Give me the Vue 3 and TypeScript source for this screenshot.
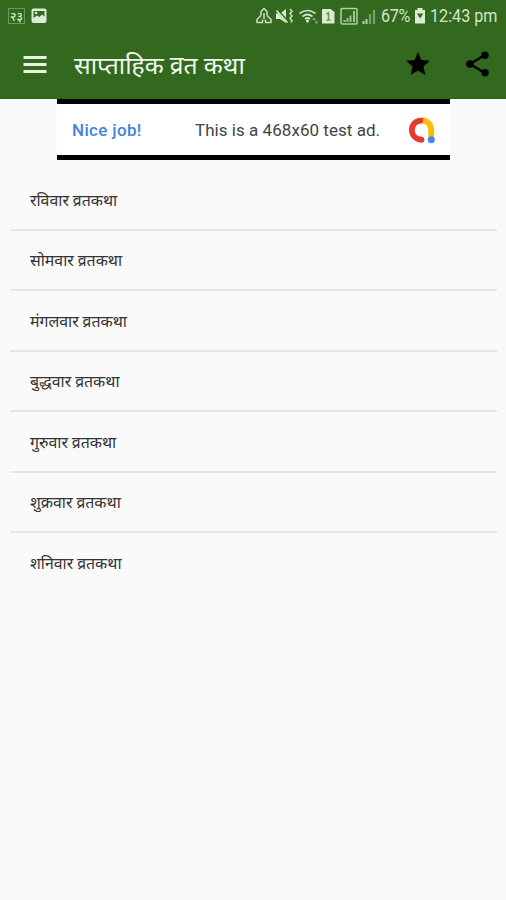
<script setup lang="ts">
interface Katha {
  id: number
  title: string
}

const kathas: Katha[] = [
  { id: 1, title: 'रविवार व्रतकथा' },
  { id: 2, title: 'सोमवार व्रतकथा' },
  { id: 3, title: 'मंगलवार व्रतकथा' },
  { id: 4, title: 'बुद्धवार व्रतकथा' },
  { id: 5, title: 'गुरुवार व्रतकथा' },
  { id: 6, title: 'शुक्रवार व्रतकथा' },
  { id: 7, title: 'शनिवार व्रतकथा' },
]
</script>

<template>
  <div class="screen">
    <header class="header">
      <div class="status">
        <div class="notices">
          <span class="date-badge">२३</span>
          <svg class="picture" width="16" height="16" viewBox="0 0 16 16">
            <rect x="0.5" y="0.5" width="15" height="14.500" rx="2" fill="#dcebd4" />
            <path d="M2.500 3h11v5.500L11 6.500 8.500 9 6 7.500 2.500 10z" fill="#33691e" />
            <circle cx="5" cy="5" r="1.300" fill="#dcebd4" />
          </svg>
        </div>
        <div class="indicators">
          <svg class="signals" width="121" height="20" viewBox="0 0 121 20">
            <g fill="none" stroke="#cfe0c6" stroke-width="1.500" stroke-linejoin="round">
              <path d="M5 9.500V5.500L8 2.500l3 3v4M5 9.500l-4 4v3h5.500v-3M11 9.500l4 4v3H9.500v-3M8 7v6" />
            </g>
            <path d="M20 7.500h4L30 3v14l-6-4h-4z" fill="#dcebd4" />
            <path d="M20.500 3.500l12 13" stroke="#33691e" stroke-width="2.800" />
            <path d="M20.500 4.500l11 12" stroke="#dcebd4" stroke-width="1.500" />
            <path d="M34 3l2 2.300-2 2.300 2 2.300-2 2.300 2 2.300-1 2" fill="none" stroke="#cfe0c6" stroke-width="1.500" />
            <g fill="none" stroke="#cfe0c6" stroke-width="1.700">
              <path d="M43.500 7.500q8-6 16 0M46.500 10.500q5-4 10 0" />
              <path d="M49 13q2.500-2 5 0" />
            </g>
            <circle cx="51.500" cy="15" r="1.500" fill="#dcebd4" />
            <path d="M56 14l2-2.500 2 2.500zM58.500 15.500h4L60.500 18z" fill="#8eb17f" />
            <path d="M66 3h8.500l4 3v11.500H66z" fill="#dcebd4" />
            <path d="M70.500 8l2-1.200V14M70.500 14h4" fill="none" stroke="#6d9559" stroke-width="1.500" />
            <rect x="85" y="2.500" width="16" height="15.500" rx="1" fill="none" stroke="#b4cea8" stroke-width="1.500" />
            <path d="M88.500 16v-2M91.500 16v-4M94.500 16V9.500M98 16V5" stroke="#a4c396" stroke-width="2" />
            <path d="M107.500 18v-3M110.500 18v-5" stroke="#b4cea8" stroke-width="2" />
            <path d="M114 18V8M118 18V4" stroke="#7aa067" stroke-width="2.200" />
          </svg>
          <span class="percent">67%</span>
          <svg class="battery" width="12" height="16" viewBox="0 0 12 16">
            <path d="M3.500 0h5v2H11v13.500H1V2h2.500z" fill="#dcebd4" />
            <path d="M3 5.500h6.500L6 10.500z" fill="#33691e" />
          </svg>
          <span class="clock">12:43 pm</span>
        </div>
      </div>
      <div class="toolbar">
        <button class="icon-button menu" aria-label="Menu">
          <svg width="24" height="18" viewBox="0 0 24 18">
            <path d="M0.500 1.500h23M0.500 8.500h23M0.500 15.500h23" stroke="#e8f3e2" stroke-width="3" />
          </svg>
        </button>
        <h1 class="title">साप्ताहिक व्रत कथा</h1>
        <button class="icon-button star" aria-label="Rate">
          <svg width="24" height="23" viewBox="2 2 20 19">
            <path d="M12 17.270L18.180 21l-1.640-7.030L22 9.240l-7.190-.610L12 2 9.190 8.630 2 9.240l5.460 4.730L5.820 21z" />
          </svg>
        </button>
        <button class="icon-button share" aria-label="Share">
          <svg width="23" height="26" viewBox="0 0 23 26">
            <path d="M19 4L4 13l15 9" fill="none" stroke="#000" stroke-width="2.500" />
            <circle cx="19" cy="4.200" r="3.700" />
            <circle cx="4" cy="13" r="3.800" />
            <circle cx="19" cy="21.800" r="3.700" />
          </svg>
        </button>
      </div>
    </header>

    <aside class="ad">
      <span class="ad-lead">Nice job!</span>
      <span class="ad-text">This is a 468x60 test ad.</span>
      <svg class="ad-logo" width="28" height="27" viewBox="0 0 28 27">
        <path d="M14.500 3.500A8.800 9.500 0 0 1 23.200 13V22" fill="none" stroke="#fbbc04" stroke-width="5.800" />
        <path d="M15 3.700C8 2.700 3.900 7.500 3.900 13c0 5.300 4.100 9.200 9.600 9.700" fill="none" stroke="#e43b2c" stroke-width="5.800" />
        <circle cx="13.500" cy="22.700" r="2.900" fill="#e43b2c" />
        <circle cx="23.300" cy="22.800" r="3.500" fill="#4285f4" />
      </svg>
    </aside>

    <ul class="list">
      <li v-for="katha in kathas" :key="katha.id" class="row">{{ katha.title }}</li>
    </ul>
  </div>
</template>

<style>
body {
  background: #fafafa;
}
</style>

<style scoped>
.screen {
  width: 506px;
  height: 900px;
  overflow: hidden;
  background: #fafafa;
  font-family: Roboto, 'Noto Sans', 'Noto Sans Devanagari', sans-serif;
}

.header {
  height: 99px;
  box-sizing: border-box;
  background: #33691e;
  border-bottom: 1px solid #2a651c;
}

.status {
  display: flex;
  justify-content: space-between;
  height: 32px;
  padding: 0 9px 0 8px;
  align-items: center;
}

.notices,
.indicators {
  display: flex;
  align-items: center;
}

.notices {
  gap: 7px;
}

.date-badge {
  box-sizing: border-box;
  display: flex;
  justify-content: center;
  width: 17px;
  height: 16px;
  border: 1px solid #6e985c;
  color: #dcebd4;
  font-size: 12px;
  font-weight: 500;
  line-height: 16px;
}

.notices .picture {
  margin-left: -1px;
}

.percent,
.clock {
  color: #d4e4cb;
  font-family: Roboto, sans-serif;
  font-size: 19px;
  line-height: 32px;
  white-space: nowrap;
  transform: scaleX(0.85);
  transform-origin: left center;
}

.percent {
  width: 30px;
  margin-left: 4px;
  letter-spacing: -0.4px;
}

.battery {
  margin: 0 4px 0 3px;
}

.clock {
  width: 67px;
}

.toolbar {
  display: flex;
  align-items: center;
  height: 66px;
  padding: 0 17px 0 23px;
}

.icon-button {
  display: flex;
  padding: 0;
  border: 0;
  background: none;
}

.title {
  flex: 1;
  margin: 0 0 0 27px;
  padding-top: 1px;
  color: #f0f7ec;
  font-size: 24.700px;
  font-weight: 400;
  line-height: 32px;
  white-space: nowrap;
}

.star {
  margin-bottom: 3px;
}

.share {
  margin-bottom: 2px;
  margin-left: 36px;
}

.ad {
  display: flex;
  align-items: center;
  box-sizing: border-box;
  width: 393px;
  height: 61px;
  margin-left: 57px;
  padding: 0 14px 0 15px;
  border-top: 5px solid #000;
  border-bottom: 5px solid #000;
  background: #fff;
  color: #444;
  font-size: 17px;
  white-space: nowrap;
}

.ad-lead {
  width: 123px;
  color: #4384dc;
  font-weight: 500;
  letter-spacing: 0.350px;
}

.ad-text {
  flex: 1;
  letter-spacing: 0.040px;
}

.ad-logo {
  margin-top: 1px;
}

.list {
  margin: 0;
  padding: 10px 9px 0 10px;
  list-style: none;
}

.row {
  display: flex;
  align-items: center;
  box-sizing: border-box;
  height: 60.5px;
  padding: 3px 0 0 20px;
  border-bottom: 2px solid #e6e6e6;
  color: #333;
  font-size: 15.900px;
  line-height: 24px;
}

.row:last-child {
  border-bottom-color: transparent;
}
</style>
